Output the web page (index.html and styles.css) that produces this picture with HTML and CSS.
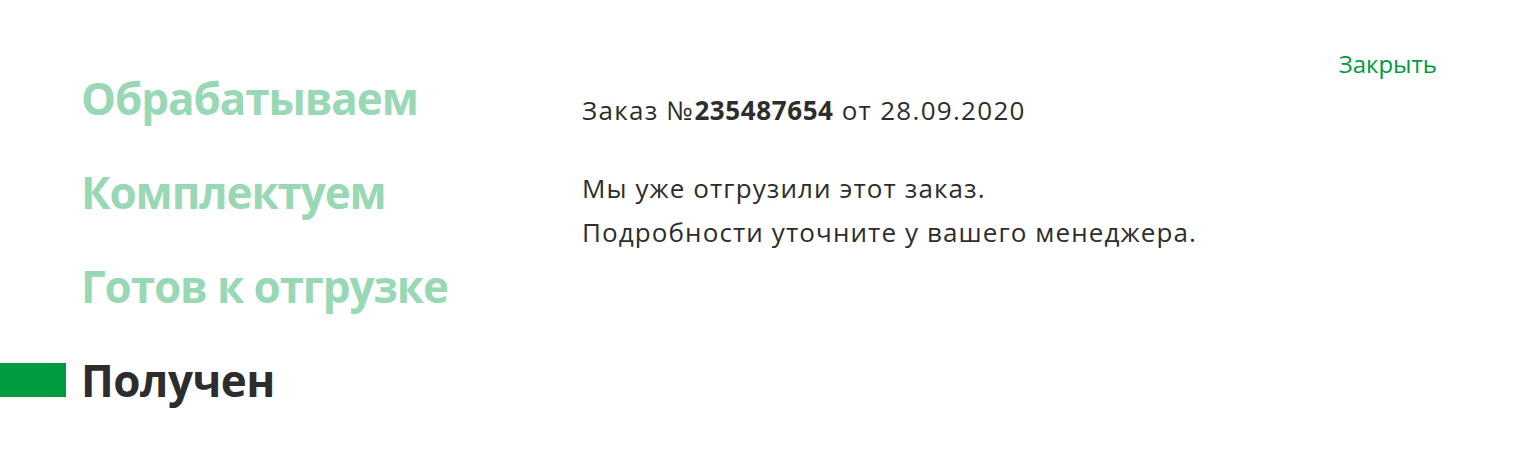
FILE: index.html
```html
<!DOCTYPE html>
<html lang="ru">
<head>
<meta charset="utf-8">
<link rel="stylesheet" href="styles.css">
</head>
<body>
<div class="page">
  <ul class="steps">
    <li class="step"><span class="marker"></span><span class="label">Обрабатываем</span></li>
    <li class="step"><span class="marker"></span><span class="label">Комплектуем</span></li>
    <li class="step"><span class="marker"></span><span class="label">Готов к отгрузке</span></li>
    <li class="step active"><span class="marker"></span><span class="label">Получен</span></li>
  </ul>
  <div class="info">
    <p class="order">Заказ №<b>235487654</b> от 28.09.2020</p>
    <p class="msg">Мы уже отгрузили этот заказ.<br>Подробности уточните у вашего менеджера.</p>
  </div>
  <a class="close" href="#">Закрыть</a>
</div>
</body>
</html>
```
FILE: styles.css
```css
html, body { margin: 0; padding: 0; background: #fff; }
body { font-family: "Open Sans", Lato, sans-serif; color: #2d2d2d; }
.page { display: flex; align-items: flex-start; height: 468px; padding-right: 81px; box-sizing: border-box; }
.steps { list-style: none; margin: 0; padding: 76px 0 0 0; width: 582px; flex: none; display: flex; flex-direction: column; gap: 50px; }
.step { display: flex; align-items: center; gap: 15px; height: 44px; }
.marker { width: 66px; height: 34px; flex: none; }
.label { font-size: 44px; font-weight: 700; letter-spacing: -1.1px; color: #98d8b4; line-height: 44px; white-space: nowrap; }
.active .marker { background: #009a3f; }
.active .label { color: #2d2d2d; letter-spacing: -0.5px; }
.info { flex: 1; padding-top: 94px; }
.order { margin: 0; font-size: 26px; line-height: 32px; letter-spacing: 1.3px; }
.order b { font-weight: 700; letter-spacing: 0.6px; }
.msg { margin: 40px 0 0; font-size: 26px; line-height: 44px; letter-spacing: 1.1px; }
.close { margin-top: 49px; font-size: 24px; color: #009a3f; text-decoration: none; line-height: 30px; }
```
